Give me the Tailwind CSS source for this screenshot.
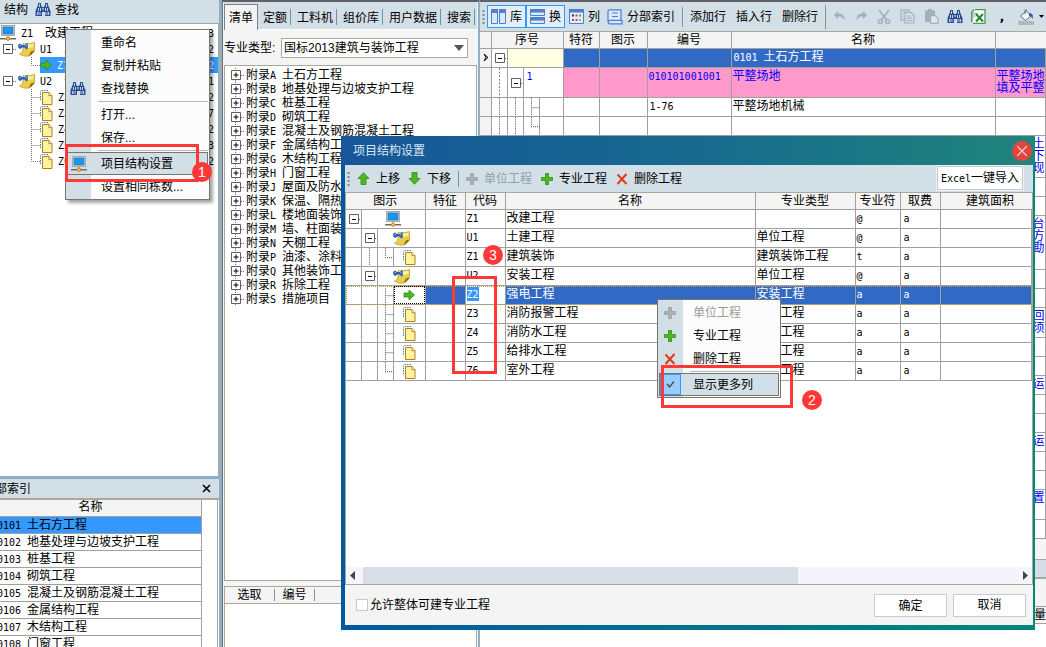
<!DOCTYPE html>
<html lang="zh-CN">
<head>
<meta charset="utf-8">
<title>项目结构设置</title>
<script src="https://cdn.jsdelivr.net/npm/@tailwindcss/browser@4"></script>
</head>
<body class="relative flex h-screen overflow-hidden bg-[#f4f4f4] font-['Liberation_Sans','Noto_Sans_CJK_SC',sans-serif] text-[12px] leading-4 text-black whitespace-nowrap">

<svg class="hidden">
  <symbol id="binoculars" viewBox="0 0 16 16">
    <path d="M3 1h3v2l1 2h2l1-2V1h3v2l2.500 6v5h-5.500v-4H7v4H.5V9L3 3z" fill="#2b4f90"/>
    <path d="M3 6h1v3H3zM5 6h1v3H5zM10 6h1v3h-1zM12 6h1v3h-1zM2 10h1.500v3H2zM4.500 10h1v3h-1zM10.500 10h1v3h-1zM12.500 10H14v3h-1.500zM4 2h1v3H4zM11 2h1v3h-1z" fill="#b9cfec"/>
    <path d="M7 6h2v2H7z" fill="#7ea3d4"/>
  </symbol>
  <symbol id="monitor" viewBox="0 0 16 16">
    <rect x="1.500" y=".5" width="13" height="10" fill="#e4e4e0" stroke="#a9a9a4"/>
    <rect x="3" y="2" width="10" height="7" fill="#1c97ee" stroke="#2673b8" stroke-width=".8"/>
    <path d="M7.500 11h1v2h-1z" fill="#c38a2a"/>
    <path d="M0 13h16v1.500H0z" fill="#6d6d6d"/>
    <circle cx="8" cy="13.700" r="1.700" fill="#ffc94d" stroke="#d27b1a"/>
  </symbol>
  <symbol id="note" viewBox="0 0 17 16">
    <path d="M5 2.500c4 .5 8 0 11.500-1V10c-2 2-3 4-5.500 5-3.500.6-7 0-9.500-2C5 11.500 5.500 7.500 5 2.500z" fill="#e9cf45" stroke="#b0901c" stroke-width=".6"/>
    <path d="M6 3.200c4 .4 7 0 9.500-.8v3c-3 1.500-6 2-9 1.500z" fill="#fbef9c"/>
    <path d="M16.500 10c-2.500-.8-4.500 0-5.500 5 2.500-1 3.500-3 5.500-5z" fill="#8d7418"/>
    <path d="M0 4l2-1.500L4 4h3l2-2 .8 1.500v4L8.500 8.500 6.500 6.500H4L2.500 8 .5 7z" fill="#2a5fb8"/>
    <path d="M1.500 4h1.500v1H1.500zM7.500 4h1v1.500h-1z" fill="#9cc0f0"/>
  </symbol>
  <symbol id="page" viewBox="0 0 13 15">
    <path d="M.5 10V1.500l1-1H8" fill="none" stroke="#3f7fb8" stroke-dasharray="1.500 1"/>
    <path d="M2.500 2.500H9l3 3.200v8.800H2.500z" fill="#fff3a0" stroke="#b08218"/>
    <path d="M9 2.500v3.200h3" fill="#fff" stroke="#b08218"/>
  </symbol>
  <symbol id="right" viewBox="0 0 12 12"><path d="M1 4h5V1l5.500 5L6 11V8H1z" fill="#4fb81f" stroke="#2f8a12" stroke-width=".8"/></symbol>
  <symbol id="up" viewBox="0 0 13 13"><path d="M6.500.7 12 6.500H9v6H4v-6H1z" fill="#4fb81f" stroke="#2f8a12" stroke-width=".8"/></symbol>
  <symbol id="down" viewBox="0 0 13 13"><path d="M6.500 12.300 12 6.500H9v-6H4v6H1z" fill="#4fb81f" stroke="#2f8a12" stroke-width=".8"/></symbol>
  <symbol id="plus" viewBox="0 0 12 12"><path d="M4.500.5h3v4h4v3h-4v4h-3v-4h-4v-3h4z" fill="#4fb81f" stroke="#2f8a12" stroke-width=".8"/></symbol>
  <symbol id="plusoff" viewBox="0 0 12 12"><path d="M4.500.5h3v4h4v3h-4v4h-3v-4h-4v-3h4z" fill="#a9b1b6" stroke="#98a0a5" stroke-width=".8"/></symbol>
  <symbol id="cross" viewBox="0 0 12 12"><path d="M1.500 1.500 10.500 11M10.500 1 1.500 11" fill="none" stroke="#e2391b" stroke-width="2"/></symbol>
</svg>

<!-- Project structure and index -->
<aside class="flex w-[222px] shrink-0 flex-col border-r-3 border-[#8fafc6] bg-white">
  <div class="flex h-6 shrink-0 items-center border-b border-[#aca899] bg-[#d3dfe7] pb-1 pl-1">
    <span>结构</span>
    <svg class="ml-[7px] size-4"><use href="#binoculars"/></svg>
    <span class="ml-1">查找</span>
  </div>
  <ul id="structure" class="min-h-0 flex-1 border-r border-[#aca899] pt-px"></ul>
  <section class="flex h-[171px] shrink-0 flex-col overflow-hidden border-t-3 border-[#8fafc6]">
    <div class="flex h-[21px] shrink-0 items-center justify-between border-b-2 border-[#aca899] bg-[#d3dfe7] pr-[5px]">
      <span class="-ml-[17px]">分部索引</span>
      <button class="grid size-4 place-items-center" aria-label="关闭"><svg class="size-[9px]" viewBox="0 0 9 9"><path d="M1 1l7 7M8 1L1 8" stroke="#000" stroke-width="1.600"/></svg></button>
    </div>
    <div class="mr-px border-r border-[#aca899] pr-[15px]">
      <table class="w-full table-fixed border-r border-[#a0a0a0]">
        <thead><tr class="h-4 border-b border-[#a0a0a0] bg-[#f4f4f4]"><th class="p-0 pr-5 font-normal leading-[15px]">名称</th></tr></thead>
        <tbody id="index"></tbody>
      </table>
    </div>
  </section>
</aside>

<!-- Bill library -->
<section class="flex w-[258px] shrink-0 flex-col border-t-2 border-r-2 border-l border-t-[#606068] border-r-[#8fafc6] border-l-[#707070] pr-px pl-px">
  <nav class="flex h-7 shrink-0 items-end bg-[#d3dfe7]">
    <button class="h-[26px] w-[34px] border border-b-0 border-[#808080] bg-[#f4f4f4]">清单</button>
    <div class="flex h-[26px] flex-1 items-center border-b border-white pl-[5px]">
      <button class="border-r border-[#6f91a8] pt-[2px] pr-[3px] leading-[14px]">定额</button>
      <button class="border-r border-[#6f91a8] pt-[2px] pr-[3px] pl-[6px] leading-[14px]">工料机</button>
      <button class="border-r border-[#6f91a8] pt-[2px] pr-[3px] pl-[6px] leading-[14px]">组价库</button>
      <button class="border-r border-[#6f91a8] pt-[2px] pr-[3px] pl-[6px] leading-[14px]">用户数据</button>
      <button class="border-r border-[#6f91a8] pt-[2px] pr-[3px] pl-[6px] leading-[14px]">搜索</button>
    </div>
  </nav>
  <div class="flex h-[35px] shrink-0 items-center pr-[9px]">
    <label for="kind" class="w-[57px]">专业类型:</label>
    <div class="relative flex-1">
      <select id="kind" class="h-5 w-full appearance-none border border-[#aca899] bg-white pl-[2px]"><option>国标2013建筑与装饰工程</option></select>
      <svg class="pointer-events-none absolute top-[7px] right-1 h-[6px] w-[10px]" viewBox="0 0 10 6"><path d="M0 0h10L5 6z" fill="#555"/></svg>
    </div>
  </div>
  <ul id="library" class="min-h-0 flex-1 overflow-hidden border border-[#aca899] bg-white pt-[2px] pl-[5px]"></ul>
  <div class="mt-[5px] h-[61px] shrink-0 border border-b-0 border-[#aca899] bg-white">
    <div class="flex h-[17px] items-center border-b border-[#aca899] bg-[#f4f4f4]">
      <span class="w-[50px] border-r border-[#909090] text-center leading-3">选取</span>
      <span class="w-10 border-r border-[#909090] text-center leading-3">编号</span>
    </div>
  </div>
</section>

<!-- Bill grid -->
<main class="flex min-w-0 flex-1 flex-col border-t-2 border-[#606068] bg-white">
  <div class="flex h-[30px] shrink-0 items-center overflow-hidden border-b border-[#aca899] bg-[#d3dfe7] pl-[2px]">
    <svg class="mr-[2px] h-[14px] w-[3px] shrink-0"><path d="M1.500 0v14" stroke="#7d8890" stroke-width="2" stroke-dasharray="2 2"/></svg>
    <button class="flex h-[23px] w-[39px] shrink-0 items-center gap-1 border border-[#3399ff] bg-[#e4eef8] pl-[3px]">
      <svg class="size-[15px]" viewBox="0 0 15 15"><path d="M.5.5h6v14h-6zM8.500.5h6v14h-6z" fill="#dbe8fa" stroke="#4b7fd0"/><path d="M0 0h7v4H0zM8 0h7v4H8z" fill="#4b7fd0"/><path d="M4 1.500h1.500M12 1.500h1.500" stroke="#f55"/></svg>库</button>
    <button class="flex h-[23px] w-[39px] shrink-0 items-center gap-1 border border-[#3399ff] bg-[#e4eef8] pl-[3px]">
      <svg class="size-[15px]" viewBox="0 0 15 15"><path d="M.5.5h14v6H.5zM.5 8.500h14v6H.5z" fill="#dbe8fa" stroke="#4b7fd0"/><path d="M0 0h15v3.500H0zM0 8h15v3.500H0z" fill="#4b7fd0"/><path d="M12 1.500h1.500M12 9.500h1.500" stroke="#f55"/></svg>换</button>
    <button class="ml-1 flex shrink-0 items-center gap-1">
      <svg class="size-[15px]" viewBox="0 0 15 15"><path d="M.5.5h14v14H.5z" fill="#e4eefc" stroke="#4b7fd0"/><path d="M0 0h15v3.500H0z" fill="#4b7fd0"/><path d="M3 5.500h2v2H3z" fill="#333"/><path d="M6.500 5.500h2v2h-2zM3 10h2v2H3z" fill="#d33"/><path d="M10 5.500h2v2h-2z" fill="#4a4"/><path d="M6.500 10h2v2h-2z" fill="#46d"/><path d="M10 10h2v2h-2z" fill="#e90"/></svg>列</button>
    <button class="ml-[7px] flex shrink-0 items-center gap-1">
      <svg class="size-4" viewBox="0 0 16 16"><path d="M3 .8h11v10.500H3a2 2 0 0 0-2 2V2.500A1.700 1.700 0 0 1 3 .8zM3 11.300h12v3.500H3a1.700 1.700 0 0 1 0-3.500z" fill="#dbe8fa" stroke="#4b7fd0" stroke-width="1.200"/><path d="M5 4h6M5 7.500h6" stroke="#4b7fd0"/></svg>分部索引</button>
    <span class="mx-[7px] h-5 w-px shrink-0 bg-[#7d97a8]"></span>
    <button class="shrink-0">添加行</button>
    <button class="ml-[10px] shrink-0">插入行</button>
    <button class="ml-[10px] shrink-0">删除行</button>
    <span class="mx-[7px] h-6 w-px shrink-0 bg-[#909090]"></span>
    <div class="flex shrink-0 items-center gap-[9px] text-[#a4b0b8]">
      <button aria-label="撤销"><svg class="block size-[13px]" viewBox="0 0 13 13"><path d="M1 5l4-4v2.500c4 0 7 2 6.500 7C10 7 8 6.500 5 6.500V9z" fill="currentColor"/></svg></button>
      <button aria-label="重做"><svg class="block size-[13px]" viewBox="0 0 13 13"><path d="M12 5L8 1v2.500c-4 0-7 2-6.500 7C3 7 5 6.500 8 6.500V9z" fill="currentColor"/></svg></button>
      <button aria-label="剪切"><svg class="block h-4 w-[14px]" viewBox="0 0 14 16" fill="none" stroke="currentColor" stroke-width="1.600"><path d="M2 1l7.500 10M12 1L4.500 11"/><circle cx="3.300" cy="12.500" r="2"/><circle cx="10.700" cy="12.500" r="2"/></svg></button>
      <button aria-label="复制"><svg class="block size-[15px]" viewBox="0 0 15 15" fill="none" stroke="currentColor" stroke-width="1.200"><path d="M9 3V.8H1v10h4"/><path d="M5 3.500h6l3 3V14H5zM7 7h3M7 9h5M7 11.500h5M3 3h4M3 5.500h1M3 8h1"/></svg></button>
      <button aria-label="粘贴"><svg class="block size-[15px]" viewBox="0 0 15 15"><path d="M1 1.500h3V0h4v1.500h3V6H6v7H1z" fill="currentColor"/><path d="M6.600 6.600h4.500l3 3v4.800H6.600z" fill="#dfe7ec" stroke="currentColor" stroke-width="1.200"/></svg></button>
      <button aria-label="查找" class="-ml-px"><svg class="block size-4"><use href="#binoculars"/></svg></button>
      <button aria-label="导出表格" class="-ml-px"><svg class="block size-[15px]" viewBox="0 0 15 15"><path d="M4 .7h10v13.600H2" fill="#fff" stroke="#4b9a4e" stroke-width="1.300"/><path d="M1.500 4.500h5M1.500 7h3" stroke="#7fbf7f"/><path d="M.7 13V3L3 .7" fill="none" stroke="#4b9a4e" stroke-width="1.300"/><path d="M5 5l7 7.500M12 5l-7 7.500" stroke="#24862c" stroke-width="2"/></svg></button>
      <span class="w-[14px] text-center font-['DejaVu_Sans'] font-bold text-black">,</span>
      <button aria-label="填充" class="flex items-center gap-[5px]"><svg class="block size-4" viewBox="0 0 16 16"><path d="M2.500 7l6-5 4.500 5-5.500 4.500z" fill="#f4f8fb" stroke="#55708a"/><path d="M7 5V1h2" fill="none" stroke="#55708a"/><path d="M11 4c4 0 4.500 3 3.500 6-1-2-1.500-3-3.500-3z" fill="#2d62b6"/><path d="M0 12h16v4H0z" fill="#aaa"/><path d="M0 13h16M0 15h16" stroke="#ddd" stroke-dasharray="1 1"/></svg><svg class="h-[3px] w-[5px]" viewBox="0 0 5 3"><path d="M0 0h5L2.500 3z"/></svg></button>
    </div>
  </div>
  <div class="min-h-0 flex-1 overflow-hidden">
    <table class="w-full table-fixed border-collapse">
      <colgroup><col class="w-[11px]"><col class="w-[72px]"><col class="w-9"><col class="w-12"><col class="w-[84px]"><col class="w-[264px]"><col></colgroup>
      <thead><tr class="h-4 border-b border-[#a0a0a0] bg-[#f4f4f4] leading-4">
        <th class="border-r border-[#a0a0a0] p-0"></th><th class="border-r border-[#a0a0a0] p-0 font-normal">序号</th><th class="border-r border-[#a0a0a0] p-0 font-normal">特符</th><th class="border-r border-[#a0a0a0] p-0 font-normal">图示</th><th class="border-r border-[#a0a0a0] p-0 font-normal">编号</th><th class="border-r border-[#a0a0a0] p-0 font-normal">名称</th><th class="p-0"></th>
      </tr></thead>
      <tbody id="bill"></tbody>
    </table>
    <div class="h-5 bg-[#f4f4f4]"></div>
    <div class="h-[19px] border-y border-[#aca899] bg-[#d8dde5]"></div>
    <div class="h-[28px] border-t border-[#8fafc6] bg-[#f4f4f4]"></div>
    <div class="h-[18px] border-y border-[#a0a0a0] bg-[#f4f4f4] text-right">工程量</div>
  </div>
</main>

<!-- Structure context menu -->
<div role="menu" class="absolute top-[29px] left-[65px] w-[145px] border border-[#77756c] bg-linear-to-r from-[#d3dfe7] from-[25px] to-[#fcfcfc] to-[25px] p-px shadow-[3px_3px_3px_rgba(0,0,0,0.35)]">
  <button role="menuitem" class="flex h-[23px] w-full items-center pl-[34px]">重命名</button>
  <button role="menuitem" class="flex h-[23px] w-full items-center pl-[34px]">复制并粘贴</button>
  <button role="menuitem" class="flex h-[23px] w-full items-center gap-[15px] pl-[3px]"><svg class="size-4"><use href="#binoculars"/></svg>查找替换</button>
  <hr class="mt-px mb-px ml-[31px] border-[#b5b5b5]">
  <button role="menuitem" class="flex h-[23px] w-full items-center pl-[34px]">打开...</button>
  <button role="menuitem" class="flex h-[23px] w-full items-center pl-[34px]">保存...</button>
  <hr class="mt-px mb-px ml-[31px] border-[#b5b5b5]">
  <button role="menuitem" class="flex h-[23px] w-full items-center gap-[14px] border border-[#77756c] bg-[#d3dfe7] pl-[3px]"><svg class="size-4"><use href="#monitor"/></svg>项目结构设置</button>
  <button role="menuitem" class="flex h-[23px] w-full items-center pl-[34px]">设置相同栋数...</button>
</div>
<div class="absolute top-[144px] left-[65px] h-[38px] w-[134px] border-3 border-[#fe3737]"></div>
<div class="absolute top-[162px] left-[192px] grid size-5 place-items-center rounded-full bg-[#fe3737] text-[14px] text-white">1</div>

<!-- Project structure dialog -->
<section role="dialog" aria-labelledby="title" class="absolute top-[136px] right-[11px] bottom-[17px] left-[341px] flex flex-col bg-linear-to-r from-[#0058a0] to-[#008878] pr-[2px] pb-[5px] pl-1">
  <header class="-mr-[2px] -ml-1 flex h-[29px] shrink-0 items-center justify-between bg-linear-to-r from-[#175699] via-[#18698e] via-50% to-[#20857a] pr-[3px] pl-3">
    <h1 id="title" class="text-[#d8e8f4]">项目结构设置</h1>
    <button aria-label="关闭" class="grid size-5 place-items-center rounded-full bg-[#e04540]"><svg class="size-[10px]" viewBox="0 0 10 10"><path d="M0 0l10 10M10 0L0 10" stroke="#f8dcdc" stroke-width="1.200"/></svg></button>
  </header>
  <div class="flex h-7 shrink-0 items-center border-b border-[#aca899] bg-[#d3dfe7] pr-[10px] pl-[2px]">
    <svg class="mr-[7px] h-[14px] w-[3px]"><path d="M1.500 0v14" stroke="#7d8890" stroke-width="2" stroke-dasharray="2 2"/></svg>
    <button class="flex items-center gap-[6px]"><svg class="size-[13px]"><use href="#up"/></svg>上移</button>
    <button class="ml-2 flex items-center gap-[6px]"><svg class="size-[13px]"><use href="#down"/></svg>下移</button>
    <span class="mx-[7px] h-4 w-px bg-[#6f91a8]"></span>
    <button disabled class="flex items-center gap-[6px] text-[#8fa0ac]"><svg class="size-3"><use href="#plusoff"/></svg>单位工程</button>
    <button class="ml-[9px] flex items-center gap-[6px]"><svg class="size-3"><use href="#plus"/></svg>专业工程</button>
    <button class="ml-[9px] flex items-center gap-[6px]"><svg class="size-3"><use href="#cross"/></svg>删除工程</button>
    <button class="mb-px ml-auto h-[24px] w-[86px] border border-[#c2c8ce] bg-white outline-1 outline-[#eef2f5]"><span class="font-['DejaVu_Sans_Mono'] text-[10px]">Excel</span>一键导入</button>
  </div>
  <div class="min-h-0 flex-1 overflow-hidden border-x border-[#aca899] bg-white">
    <table class="w-full table-fixed border-collapse border-b border-[#a0a0a0]">
      <colgroup><col class="w-[79px]"><col class="w-10"><col class="w-10"><col class="w-[250px]"><col class="w-[100px]"><col class="w-[45px]"><col class="w-10"><col></colgroup>
      <thead><tr class="h-4 border-b border-[#a0a0a0] bg-[#f4f4f4] leading-4">
        <th class="border-r border-[#a0a0a0] p-0 font-normal">图示</th><th class="border-r border-[#a0a0a0] p-0 font-normal">特征</th><th class="border-r border-[#a0a0a0] p-0 font-normal">代码</th><th class="border-r border-[#a0a0a0] p-0 font-normal">名称</th><th class="border-r border-[#a0a0a0] p-0 font-normal">专业类型</th><th class="border-r border-[#a0a0a0] p-0 font-normal">专业符</th><th class="border-r border-[#a0a0a0] p-0 font-normal">取费</th><th class="p-0 pl-2 font-normal">建筑面积</th>
      </tr></thead>
      <tbody id="items"></tbody>
    </table>
  </div>
  <div class="flex h-[18px] shrink-0 items-center border-x border-b border-[#aca899] bg-[#f4f5fa] px-1">
    <svg class="h-[9px] w-[5px]" viewBox="0 0 5 9"><path d="M5 0v9L0 4.500z" fill="#444"/></svg>
    <div class="mx-2 h-full flex-1"><div class="h-full w-2/3 bg-[#d9dde7]"></div></div>
    <svg class="h-[9px] w-[5px]" viewBox="0 0 5 9"><path d="M0 0v9l5-4.500z" fill="#444"/></svg>
  </div>
  <footer class="flex h-10 shrink-0 items-center bg-[#f4f4f4] pr-[7px] pl-[11px]">
    <label class="flex items-center gap-[2px]"><input type="checkbox" class="size-3 appearance-none border border-[#c4c8d0] bg-white">允许整体可建专业工程</label>
    <button class="mt-px ml-auto h-[23px] w-[73px] border border-[#c6cad6] bg-white">确定</button>
    <button class="ml-[6px] h-[23px] w-[73px] border border-[#c6cad6] bg-white">取消</button>
  </footer>
</section>
<div class="absolute top-[276px] left-[452px] h-[98px] w-[45px] border-3 border-[#fe3737]"></div>
<div class="absolute top-[245px] left-[483px] grid size-5 place-items-center rounded-full bg-[#fe3737] text-[14px] text-white">3</div>

<!-- Row context menu -->
<div role="menu" class="absolute top-[299px] left-[657px] w-[124px] border border-[#77756c] bg-linear-to-r from-[#d3dfe7] from-[25px] to-[#fcfcfc] to-[25px] p-px">
  <button role="menuitem" disabled class="flex h-[23px] w-full items-center gap-[17px] pl-[5px] text-[#9a9a9a]"><svg class="size-3"><use href="#plusoff"/></svg>单位工程</button>
  <button role="menuitem" class="flex h-[23px] w-full items-center gap-[17px] pl-[5px]"><svg class="size-3"><use href="#plus"/></svg>专业工程</button>
  <button role="menuitem" class="flex h-[23px] w-full items-center gap-[17px] pl-[5px]"><svg class="size-3"><use href="#cross"/></svg>删除工程</button>
  <hr class="mt-px mb-px ml-[31px] border-[#b5b5b5]">
  <button role="menuitemcheckbox" aria-checked="true" class="flex h-[23px] w-full items-center gap-3 border border-[#77756c] bg-[#d3dfe7]"><span class="grid h-full w-[21px] place-items-center border border-[#3399ff] bg-[#99ccff]"><svg class="size-[9px]" viewBox="0 0 9 9"><path d="M1 4l2.500 3L8 1.500" fill="none" stroke="#444" stroke-width="1.200"/></svg></span>显示更多列</button>
</div>
<div class="absolute top-[365px] left-[661px] h-[43px] w-[132px] border-3 border-[#fe3737]"></div>
<div class="absolute top-[390px] left-[802px] grid size-5 place-items-center rounded-full bg-[#fe3737] text-[14px] text-white">2</div>

<script>
// Half-width characters take half the advance of a Chinese character.
const m = s => s.replace(/[\x20-\x7e]+/g, t => `<span class="font-['DejaVu_Sans_Mono'] text-[10px] whitespace-pre">${t}</span>`);
const put = (id, html) => { document.getElementById(id).innerHTML = html; };

const dots = d => `<svg class="block h-full w-4 shrink-0" preserveAspectRatio="none" viewBox="0 0 16 16"><path d="${d}" fill="none" stroke="#707070" stroke-dasharray="1 1"/></svg>`;
const through = dots('M7.500 0V16');
const branch = dots('M7.500 0V16M7.500 8.500H16');
const corner = dots('M7.500 0V8.500H16');
const blank = '<span class="h-full w-4 shrink-0"></span>';
const minus = '<svg class="block h-4 w-4 shrink-0 self-center" viewBox="0 0 16 16"><path d="M13 8.500h3" stroke="#707070" stroke-dasharray="1 1"/><path d="M3.500 3.500h9v9h-9z" fill="#fff" stroke="#606060"/><path d="M6 8h4v1H6z"/></svg>';
const plus = '<svg class="block size-[14px] shrink-0" viewBox="0 0 14 14"><path d="M5.500 0v2M5.500 12v2M11 7.500h3" stroke="#707070" stroke-dasharray="1 1"/><path d="M1.500 2.500h9v9h-9z" fill="#fff" stroke="#606060"/><path d="M3.500 7h5M6 4.500v5" stroke="#000"/></svg>';
const icons = {
  monitor: '<svg class="block size-4 shrink-0"><use href="#monitor"/></svg>',
  note: '<svg class="block h-4 w-[17px] shrink-0"><use href="#note"/></svg>',
  page: '<svg class="block h-[15px] w-[13px] shrink-0"><use href="#page"/></svg>',
  right: '<svg class="block size-3 shrink-0"><use href="#right"/></svg>'
};

// Structure tree
const indented = s => `<span class="ml-2 flex h-4">${blank}${s}</span>`;
const parts = [
  ['', 'monitor', 'Z1  改建工程', '3'], [`<span class="flex h-4 w-[18px]">${minus}</span>`, 'note', 'U1  土建工程', '2'],
  [indented(corner), 'right', 'Z1  建筑装饰', '2', 1], [`<span class="flex h-4 w-[18px]">${minus}</span>`, 'note', 'U2  安装工程', '1'],
  [indented(branch), 'page', 'Z2  强电工程', '2'], [indented(branch), 'page', 'Z3  消防报警', '7'],
  [indented(branch), 'page', 'Z4  消防水', '2'], [indented(branch), 'page', 'Z5  给排水', '3'],
  [indented(corner), 'page', 'Z6  室外工程', '2']
];
put('structure', parts.map(([tree, icon, text, n, on]) => `<li class="flex h-4 items-center">${tree}
  <span class="${on ? 'flex h-4 flex-1 items-center justify-between bg-[#3399ff] pr-1 text-white' : 'flex h-4 flex-1 items-center justify-between pr-1'}">
  <span class="flex items-center gap-[5px]">${icons[icon]}<span>${m(text)}</span></span><span>${m(n)}</span></span></li>`).join(''));

// Division index
const index = ['0101 土石方工程', '0102 地基处理与边坡支护工程', '0103 桩基工程', '0104 砌筑工程', '0105 混凝土及钢筋混凝土工程', '0106 金属结构工程', '0107 木结构工程', '0108 门窗工程'];
put('index', index.map((t, i) => `<tr class="${i ? 'h-[17px] border-b border-[#a0a0a0]' : 'h-[17px] border-b border-[#a0a0a0] bg-[#3399ff]'}"><td class="p-0"><div class="-ml-[3px] h-4">${m(t)}</div></td></tr>`).join(''));

// Library tree
const library = ['A 土石方工程', 'B 地基处理与边坡支护工程', 'C 桩基工程', 'D 砌筑工程', 'E 混凝土及钢筋混凝土工程', 'F 金属结构工程', 'G 木结构工程', 'H 门窗工程', 'J 屋面及防水工程', 'K 保温、隔热、防腐工程', 'L 楼地面装饰工程', 'M 墙、柱面装饰工程', 'N 天棚工程', 'P 油漆、涂料、裱糊工程', 'Q 其他装饰工程', 'R 拆除工程', 'S 措施项目'];
put('library', library.map(t => `<li class="flex h-[14px] items-center gap-[2px] leading-[14px]">${plus}<span>附录${m(t)}</span></li>`).join(''));

// Bill grid
const cell = 'border-r border-b border-[#a0a0a0] p-0 align-top';
const box = s => `<span class="flex h-full w-4 shrink-0 border-r border-[#a0a0a0]">${s}</span>`;
const blue = 'border-r border-b border-[#a0a0a0] bg-[#316ac5] p-0 pl-[2px] align-top text-white';
const pink = 'border-r border-b border-[#a0a0a0] bg-[#ff99cc] p-0 pl-[1px] align-top text-[#0000ff] leading-3 pt-[2px]';
const arrow = '<svg class="mt-1 ml-[3px] h-[9px] w-[6px]" viewBox="0 0 6 9"><path d="M1 1l4 3.500L1 8l2-3.500z" fill="none" stroke="#000"/></svg>';
let rows = `
<tr><td class="${cell} bg-[#f4f4f4]">${arrow}</td><td class="${cell}"><div class="flex h-[18px]">${box(minus)}<span class="flex-1 bg-[#ffffe1]"></span></div></td><td class="${blue}"></td><td class="${blue}"></td><td class="${blue}"></td><td class="${blue}">${m('0101 ')}土石方工程</td><td class="${blue}"></td></tr>
<tr><td class="${cell} bg-[#f4f4f4]"></td><td class="${cell}"><div class="flex h-[29px]">${box(through)}${box(minus)}<span class="pl-[3px] text-[#0000ff]">${m('1')}</span></div></td><td class="${pink}"></td><td class="${pink}"></td><td class="${pink}">${m('010101001001')}</td><td class="${pink}">平整场地</td><td class="${pink}">平整场地<br>填及平整</td></tr>
<tr><td class="${cell} bg-[#f4f4f4]"></td><td class="${cell}"><div class="flex h-[18px]">${box(through)}${box(through)}${box(branch)}</div></td><td class="${cell}"></td><td class="${cell}"></td><td class="${cell} pl-[2px]">${m('1-76')}</td><td class="${cell} pl-[1px]">平整场地机械</td><td class="${cell}"></td></tr>
<tr><td class="${cell} bg-[#f4f4f4]"></td><td class="${cell}"><div class="flex h-[18px]">${box(through)}${box(through)}${box(corner)}</div></td><td class="${cell}"></td><td class="${cell}"></td><td class="${cell}"></td><td class="${cell}"></td><td class="${cell}"></td></tr>`;
const tail = [[42, '土<br>下<br>现'], [19, ''], [19, ''], [54, '台<br>方<br>勘'], [19, ''], [19, ''], [30, '回<br>须'], [19, ''], [19, ''], [19, '运'], [19, ''], [19, ''], [19, '运'], [19, ''], [19, ''], [30, '置'], [19, '']];
rows += tail.map(([h, t]) => `<tr style="height:${h}px"><td class="${cell} bg-[#f4f4f4]"></td><td class="${cell}"></td><td class="${cell}"></td><td class="${cell}"></td><td class="${cell}"></td><td class="${cell}"></td><td class="${cell} pt-[2px] pl-[37px] leading-3 text-[#0000ff]">${t}</td></tr>`).join('');
put('bill', rows);

// Dialog rows
const items = [
  [box(minus), 'monitor', 'Z1', '改建工程', '', '@'],
  [box(blank) + box(minus), 'note', 'U1', '土建工程', '单位工程', '@'],
  [box(blank) + box(through) + box(corner), 'page', 'Z1', '建筑装饰', '建筑装饰工程', 't'],
  [box(blank) + box(minus), 'note', 'U2', '安装工程', '单位工程', '@'],
  [box(blank) + box(blank) + box(branch), 'right', 'Z2', '强电工程', '安装工程', 'a', 1],
  [box(blank) + box(blank) + box(branch), 'page', 'Z3', '消防报警工程', '安装工程', 'a'],
  [box(blank) + box(blank) + box(branch), 'page', 'Z4', '消防水工程', '安装工程', 'a'],
  [box(blank) + box(blank) + box(branch), 'page', 'Z5', '给排水工程', '安装工程', 'a'],
  [box(blank) + box(blank) + box(corner), 'page', 'Z6', '室外工程', '安装工程', 'a']
];
put('items', items.map(([tree, icon, code, name, kind, sign, on]) => {
  const c = on ? 'border-r border-b border-[#a0a0a0] bg-[#316ac5] p-0 pl-[1px] leading-4 align-top text-white' : 'border-r border-b border-[#a0a0a0] p-0 pl-[1px] leading-4 align-top';
  return `<tr class="${on ? 'h-[19px] outline-1 -outline-offset-1 outline-dotted outline-[#c89a50]' : 'h-[19px]'}"><td class="border-r border-b border-[#a0a0a0] p-0"><div class="flex h-[18px]">${tree}<span class="${on ? 'grid flex-1 place-items-center border border-dotted border-black' : 'grid flex-1 place-items-center'}">${icons[icon]}</span></div></td>
  <td class="${c}"></td><td class="border-r border-b border-[#a0a0a0] p-0 pl-[1px] align-top leading-4">${on ? `<span class="bg-[#3399ff] text-white">${m(code)}</span>` : m(code)}</td>
  <td class="${c}">${name}</td><td class="${c}">${kind}</td><td class="${c}">${m(sign)}</td><td class="${c}"><span class="pl-[2px]">${m('a')}</span></td><td class="${c}"></td></tr>`;
}).join(''));
</script>
</body>
</html>
